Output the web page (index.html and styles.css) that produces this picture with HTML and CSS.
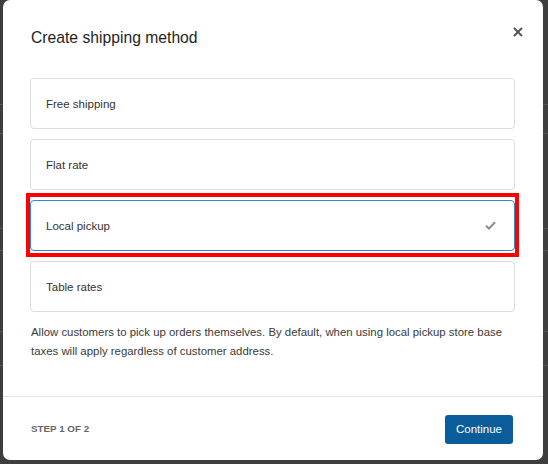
FILE: index.html
```html
<!DOCTYPE html>
<html lang="en">
<head>
<meta charset="utf-8">
<title>Create shipping method</title>
<link rel="stylesheet" href="styles.css">
</head>
<body>
<div class="backdrop">
  <div class="modal" role="dialog" aria-labelledby="modal-title">
    <div class="modal-header">
      <h2 class="modal-title" id="modal-title">Create shipping method</h2>
      <button class="modal-close" type="button" aria-label="Close">
        <svg width="10" height="10" viewBox="0 0 10 10"><path d="M1 1 L9 9 M9 1 L1 9" stroke="#555" stroke-width="2" stroke-linecap="butt"/></svg>
      </button>
    </div>
    <div class="modal-body">
      <ul class="options">
        <li class="option">Free shipping</li>
        <li class="option">Flat rate</li>
        <li class="option is-selected highlight">
          <span>Local pickup</span>
          <svg class="check" width="11" height="9" viewBox="0 0 11 9"><path d="M1 4.8 L4 7.6 L10 1.2" fill="none" stroke="#8c8c8c" stroke-width="2"/></svg>
        </li>
        <li class="option">Table rates</li>
      </ul>
      <p class="description">Allow customers to pick up orders themselves. By default, when using local pickup store base taxes will apply regardless of customer address.</p>
    </div>
    <div class="modal-footer">
      <span class="step">Step 1 of 2</span>
      <button class="btn-primary" type="button">Continue</button>
    </div>
  </div>
</div>
</body>
</html>
```
FILE: styles.css
```css
html, body {
  margin: 0;
  padding: 0;
}

body {
  width: 548px;
  height: 464px;
  overflow: hidden;
  font-family: "Liberation Sans", Arial, sans-serif;
  background-color: #3e3e3e;
  /* faint rows of the page behind the overlay */
  background-image:
    linear-gradient(#555, #555),
    linear-gradient(#555, #555),
    linear-gradient(#555, #555),
    linear-gradient(#555, #555),
    linear-gradient(#555, #555),
    linear-gradient(#555, #555);
  background-repeat: no-repeat;
  background-size: 100% 1px;
  background-position: 0 104px, 0 133px, 0 228px, 0 250px, 0 331px, 0 365px;
}

.backdrop {
  padding: 0 5px 0 3px;
}

.modal {
  width: 540px;
  height: 460px;
  background: #fff;
  border-radius: 7px;
  display: flex;
  flex-direction: column;
  box-sizing: border-box;
}

.modal-header {
  display: flex;
  justify-content: space-between;
  align-items: flex-start;
  padding: 27px 20px 0 28px;
}

.modal-title {
  margin: 0;
  font-size: 15.7px;
  line-height: 22px;
  font-weight: normal;
  color: #1e1e1e;
}

.modal-close {
  border: 0;
  background: none;
  padding: 0;
  width: 10px;
  height: 10px;
  display: flex;
  cursor: pointer;
}

.modal-body {
  flex: 1;
  padding: 29px 28px 0 27px;
}

.options {
  list-style: none;
  margin: 0;
  padding: 0;
  display: flex;
  flex-direction: column;
  gap: 10px;
}

.option {
  position: relative;
  height: 51px;
  box-sizing: border-box;
  border: 1px solid #dcdcdc;
  border-radius: 4px;
  padding: 0 18px 0 15px;
  display: flex;
  align-items: center;
  justify-content: space-between;
  font-size: 11.5px;
  color: #333;
}

.option.is-selected {
  border-color: #2b8ad0;
}

/* square red marker drawn around the chosen option */
.highlight::after {
  content: "";
  position: absolute;
  top: -8px;
  bottom: -7px;
  left: -5px;
  right: -5px;
  border: 4px solid #f00;
  pointer-events: none;
}

.description {
  margin: 11px 0 0 1px;
  font-size: 11.4px;
  line-height: 18.5px;
  color: #3a3a3a;
}

.modal-footer {
  height: 63px;
  border-top: 1px solid #e2e2e2;
  display: flex;
  align-items: center;
  justify-content: space-between;
  padding: 0 30px 0 28px;
}

.step {
  font-size: 9.8px;
  font-weight: bold;
  text-transform: uppercase;
  color: #666;
}

.btn-primary {
  height: 29px;
  padding: 0 11px;
  border: 0;
  border-radius: 3px;
  background: #0b5c9b;
  color: #fff;
  font-family: "Liberation Sans", Arial, sans-serif;
  font-size: 11.5px;
  margin-top: 1px;
}
```
